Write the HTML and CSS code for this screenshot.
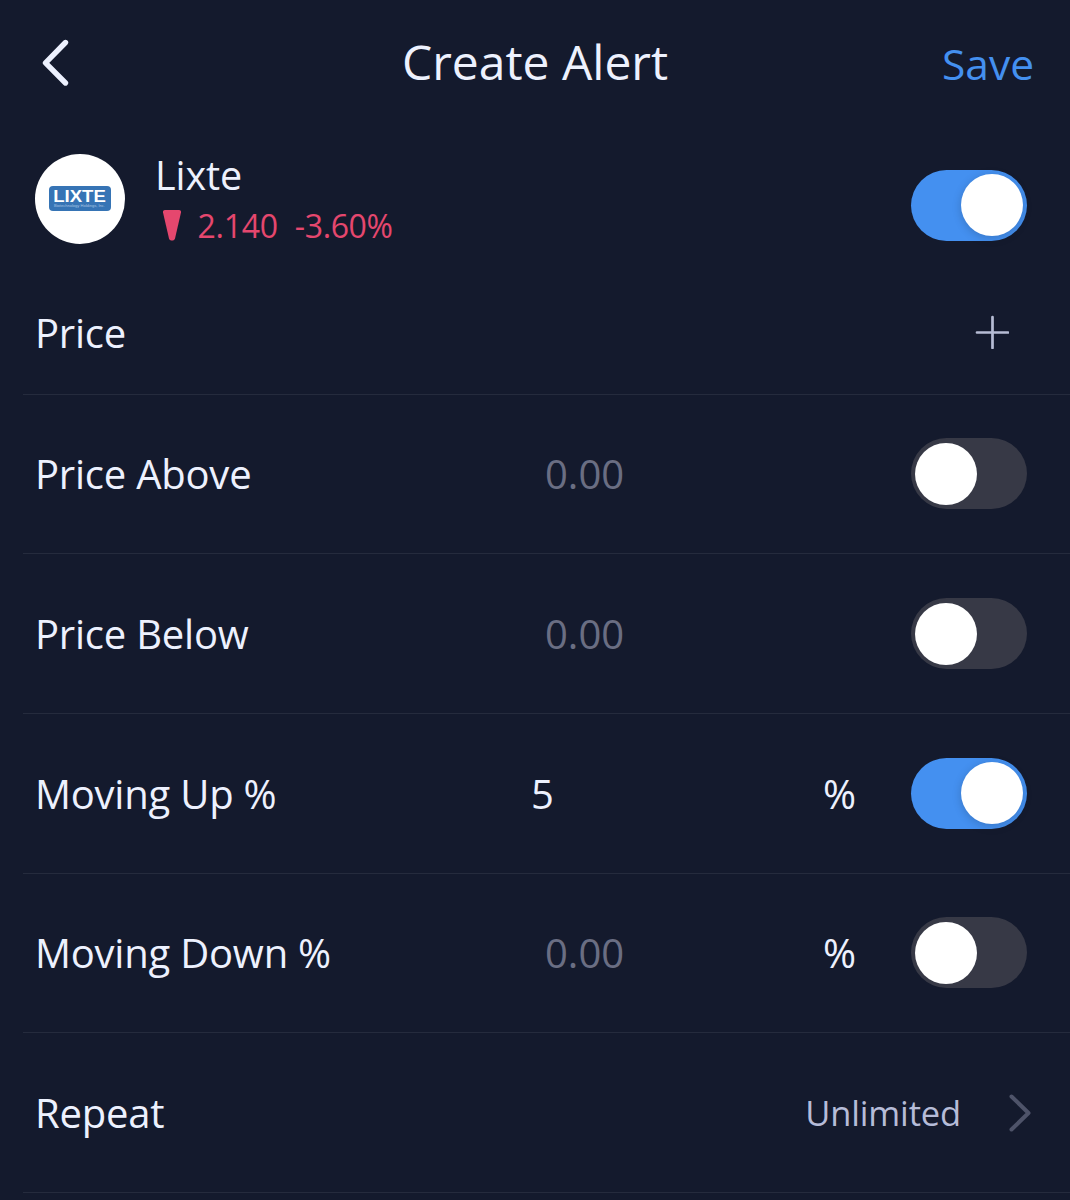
FILE: index.html
```html
<!DOCTYPE html>
<html lang="en">
<head>
<meta charset="utf-8">
<title>Create Alert</title>
<link rel="stylesheet" href="styles.css">
</head>
<body>
<main class="screen">
  <header class="topbar">
    <svg class="back" width="32" height="50" viewBox="0 0 32 50" fill="none"><path d="M26.500 5.500 6.500 25.800 26.500 46" stroke="#edf1fe" stroke-width="5.4" stroke-linecap="round" stroke-linejoin="round"/></svg>
    <h1 class="title">Create Alert</h1>
    <span class="save">Save</span>
  </header>
  <section class="stock">
    <div class="logo"><div class="logo-plate"><svg width="62" height="25" viewBox="0 0 62 25"><text class="logo-name" x="4.3" y="16" textLength="52.5" lengthAdjust="spacingAndGlyphs">LIXTE</text><text class="logo-sub" x="5" y="20.8" textLength="51" lengthAdjust="spacingAndGlyphs">Biotechnology Holdings, Inc.</text></svg></div></div>
    <div class="quote">
      <div class="name">Lixte</div>
      <div class="change">
        <svg class="down" width="20" height="32" viewBox="0 0 20 32"><path d="M3 0H17Q19.400 0 19 2.500L13 28.500Q12.400 30.500 10.800 30.500H9.200Q7.600 30.500 7 28.500L1 2.500Q.6 0 3 0Z" fill="#e5476e"/></svg>
        <span class="last">2.140</span><span class="pct">-3.60%</span>
      </div>
    </div>
    <div class="toggle on"><div class="knob"></div></div>
  </section>
  <section class="row price">
    <span class="label">Price</span>
    <svg class="plus" width="34" height="34" viewBox="0 0 34 34"><path d="M17.500 2V33M2 17.500H33" stroke="#b6bcd4" stroke-width="2.700" stroke-linecap="round"/></svg>
  </section>
  <section class="row"><span class="label">Price Above</span><span class="value">0.00</span><span class="unit"></span><div class="toggle"><div class="knob"></div></div></section>
  <section class="row"><span class="label">Price Below</span><span class="value">0.00</span><span class="unit"></span><div class="toggle"><div class="knob"></div></div></section>
  <section class="row"><span class="label">Moving Up %</span><span class="value filled">5</span><span class="unit">%</span><div class="toggle on"><div class="knob"></div></div></section>
  <section class="row"><span class="label">Moving Down %</span><span class="value">0.00</span><span class="unit">%</span><div class="toggle"><div class="knob"></div></div></section>
  <section class="row repeat">
    <span class="label">Repeat</span><span class="choice">Unlimited</span>
    <svg class="next" width="24" height="40" viewBox="0 0 24 40" fill="none"><path d="M3.500 3.500 20.500 20 3.500 36.500" stroke="#4e5369" stroke-width="4" stroke-linecap="round" stroke-linejoin="round"/></svg>
  </section>
</main>
</body>
</html>
```
FILE: styles.css
```css
* { box-sizing: border-box; }
body {
  margin: 0;
  background: #141a2d;
  color: #edf1fe;
  font-family: "Open Sans", "Noto Sans", sans-serif;
  font-size: 40px;
}
.screen { width: 1070px; height: 1200px; overflow: hidden; }
.topbar {
  height: 124px;
  display: grid;
  grid-template-columns: 197px 1fr 200px;
  align-items: center;
  padding: 0 36px 0 39px;
}
.back { display: block; }
.title { margin: 0; text-align: center; font-size: 48px; font-weight: 400; line-height: 60px; }
.save { text-align: right; font-size: 42.500px; line-height: 56px; padding-top: 3px; color: #4490f0; }
.stock { height: 147px; display: flex; align-items: flex-start; padding: 30px 43px 0 35px; }
.logo {
  width: 90px; height: 90px; border-radius: 50%; background: #fff;
  display: flex; align-items: center; justify-content: center;
  padding-bottom: 2px;
}
.logo-plate { width: 62px; height: 25px; border-radius: 4px; background: #3674b5; }
.logo-plate svg { display: block; }
.logo-name { font: 700 16px "Liberation Sans", Arial, sans-serif; fill: #fff; }
.logo-sub { font: 4px "Liberation Sans", Arial, sans-serif; fill: #a9c5e3; }
.quote { margin-left: 30px; flex: 1; }
.name { line-height: 42px; font-size: 39.500px; letter-spacing: -.1px; }
.change { display: flex; align-items: center; height: 60px; font-size: 32px; line-height: 60px; letter-spacing: -.25px; color: #e5476e; }
.down { margin: 0 15.500px 0 7px; }
.pct { margin-left: 17px; letter-spacing: -.4px; }
.toggle {
  width: 116.500px; height: 71px; border-radius: 36px; padding: 4.500px;
  background: #373946; flex: none; display: flex; justify-self: end;
}
.stock .toggle { margin-top: 15.500px; }
.toggle.on { background: #4490f0; justify-content: flex-end; }
.knob { width: 62px; height: 62px; border-radius: 50%; background: #fff; }
.on .knob { box-shadow: 0 2px 10px rgba(0, 0, 0, .18); }
.row {
  height: 159.700px;
  margin-left: 23px;
  padding: 0 43px 0 12px;
  border-bottom: 1.500px solid #252b3d;
  display: grid;
  grid-template-columns: 496px 1fr 87px 117px;
  align-items: center;
}
.row.price { height: 123.500px; display: flex; justify-content: space-between; padding-right: 61px; }
.label { letter-spacing: -.22px; }
.value { color: #6a6e83; padding-left: 14px; }
.value.filled { color: #edf1fe; padding-left: 0; }
.row.repeat { display: flex; padding-right: 38px; }
.choice { margin-left: auto; font-size: 34.500px; letter-spacing: -.15px; color: #b6bcd8; }
.next { margin-left: 47px; }
```
